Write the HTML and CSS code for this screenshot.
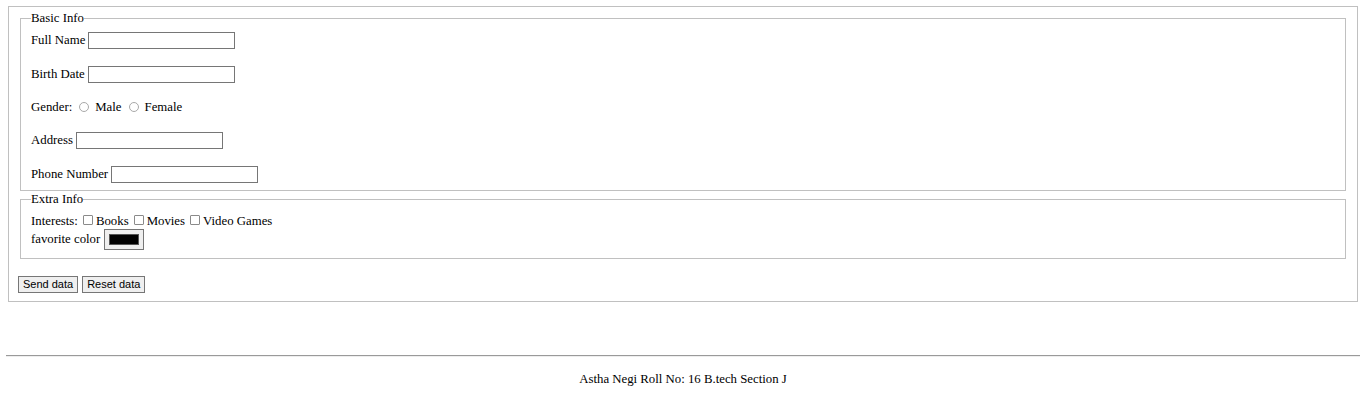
FILE: index.html
```html
<!DOCTYPE html>
<html>
<head>
<meta charset="utf-8">
<title>Form</title>
<link rel="stylesheet" href="styles.css">
</head>
<body>
<form class="form">
  <fieldset class="outer">
    <fieldset class="group">
      <legend>Basic Info</legend>
      <div class="row first"><label for="name">Full Name</label><input class="text" id="name" type="text"></div>
      <div class="row wide"><label for="bd">Birth Date</label><input class="text" id="bd" type="text"></div>
      <div class="row gender"><span class="lbl">Gender:</span>
        <span class="opt"><input class="radio" type="radio" name="g" id="m"><label for="m">Male</label></span>
        <span class="opt"><input class="radio" type="radio" name="g" id="f"><label for="f">Female</label></span>
      </div>
      <div class="row"><label for="addr">Address</label><input class="text" id="addr" type="text"></div>
      <div class="row wide"><label for="ph">Phone Number</label><input class="text" id="ph" type="text"></div>
    </fieldset>
    <fieldset class="group extra">
      <legend>Extra Info</legend>
      <div class="row2 interests"><span class="lbl">Interests:</span>
        <span class="opt"><input class="check" type="checkbox" id="b"><label for="b">Books</label></span>
        <span class="opt"><input class="check" type="checkbox" id="mv"><label for="mv">Movies</label></span>
        <span class="opt"><input class="check" type="checkbox" id="vg"><label for="vg">Video Games</label></span>
      </div>
      <div class="row2 color"><span class="lbl">favorite color</span><span class="colorbox"><span class="swatch"></span></span></div>
    </fieldset>
    <div class="buttons">
      <button type="submit" class="btn">Send data</button>
      <button type="reset" class="btn">Reset data</button>
    </div>
  </fieldset>
</form>
<hr class="rule">
<footer class="footer">Astha Negi Roll No: 16 B.tech Section J</footer>
</body>
</html>
```
FILE: styles.css
```css
html, body {
  margin: 0;
  padding: 0;
  background: #fff;
}
body {
  font-family: "Liberation Serif", "Times New Roman", serif;
  font-size: 12.8px;
  color: #000;
}
.form {
  margin: 6px 8px 0 8px;
}
.outer {
  margin: 0;
  border: 1px solid #c0c0c0;
  padding: 4px 9px 8px 9px;
}
.group {
  margin: 0 2px;
  border: 1px solid #c0c0c0;
  padding: 0 10px 7px 10px;
}
.group legend {
  padding: 0;
  line-height: 14px;
  margin-top: 1px;
}
.row {
  display: flex;
  align-items: center;
  gap: 3px;
  height: 17px;
  margin-top: 16px;
}
.row.first {
  margin-top: 7px;
}
.row.wide {
  margin-top: 17px;
}
.text {
  box-sizing: border-box;
  width: 147px;
  height: 17px;
  margin: 0;
  border: 1px solid #767676;
  padding: 0 2px;
  font: inherit;
}
.opt {
  display: inline-flex;
  align-items: center;
}
.gender .opt { margin-left: 4px; }
.radio {
  appearance: none;
  -webkit-appearance: none;
  box-sizing: border-box;
  width: 10px;
  height: 10px;
  border: 1px solid #a9a9a9;
  border-radius: 50%;
  margin: 0 6px 2px 0;
  background: #fff;
}
.extra {
  margin-top: 1px;
  padding-bottom: 8px;
}
.row2 {
  display: flex;
  align-items: center;
  gap: 3px;
}
.interests {
  height: 16px;
  margin-top: 7px;
}
.interests .opt { margin-left: 2px; }
.check {
  appearance: none;
  -webkit-appearance: none;
  box-sizing: border-box;
  width: 10px;
  height: 10px;
  border: 1px solid #8a8a8a;
  border-radius: 1px;
  margin: 0 3px 2px 0;
  background: #fff;
}
.color {
  height: 21px;
  margin-top: 0;
  gap: 4px;
}
.colorbox {
  box-sizing: border-box;
  display: inline-flex;
  width: 40px;
  height: 21px;
  padding: 4px 4px;
  border: 1px solid #767676;
  background: #efefef;
}
.swatch {
  flex: 1;
  background: #000;
  border: 1px solid #555;
}
.buttons {
  display: flex;
  gap: 4px;
  margin-top: 17px;
}
.btn {
  box-sizing: border-box;
  height: 17px;
  margin: 0;
  padding: 0 4px;
  border: 1px solid #767676;
  background: #efefef;
  font-family: "Liberation Sans", Arial, sans-serif;
  font-size: 11px;
  color: #000;
  line-height: 15px;
}
.rule {
  margin: 53px 6px 0 6px;
  border: 0;
  border-top: 1px solid #9a9a9a;
  border-bottom: 1px solid #eeeeee;
  height: 0;
}
.footer {
  text-align: center;
  margin-top: 15px;
  line-height: 14px;
}
```
